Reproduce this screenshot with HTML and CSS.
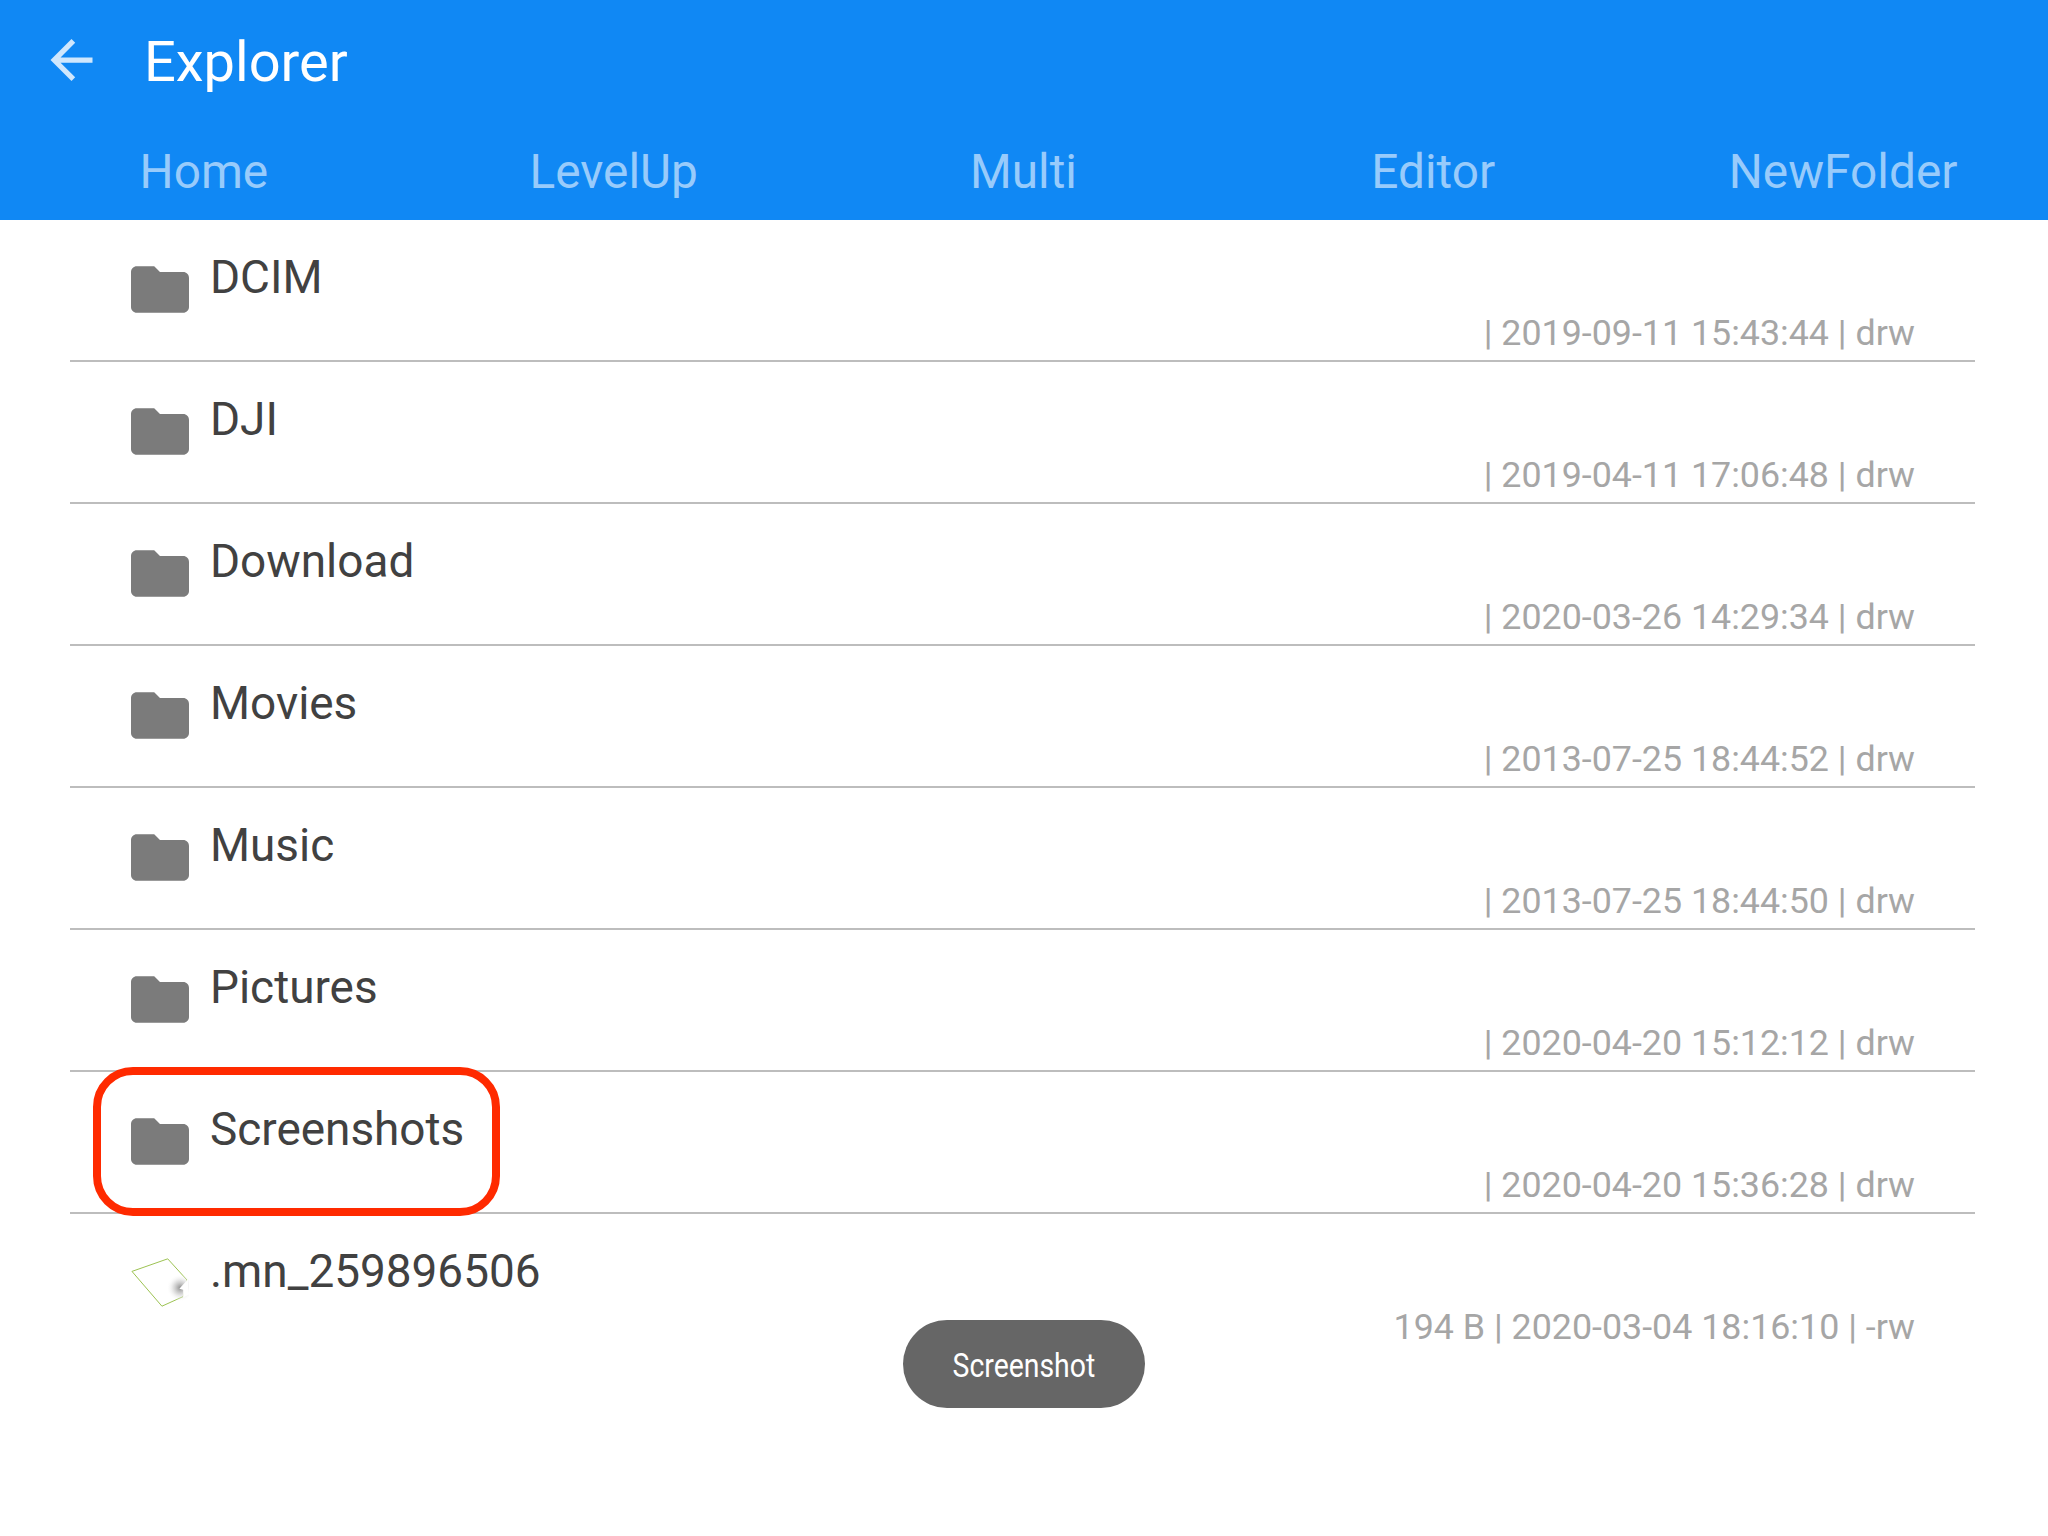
FILE: index.html
```html
<!DOCTYPE html>
<html lang="en">
<head>
<meta charset="utf-8">
<title>Explorer</title>
<link rel="stylesheet" href="styles.css">
</head>
<body>
<svg class="defs" width="0" height="0" aria-hidden="true">
  <defs>
    <symbol id="folder" viewBox="2 4 20 16"><path d="M10 4H4c-1.1 0-2 .9-2 2v12c0 1.1.9 2 2 2h16c1.1 0 2-.9 2-2V8c0-1.1-.9-2-2-2h-8l-2-2z"/></symbol>
    <radialGradient id="curl"><stop offset="0" stop-color="#8f8f8f"/><stop offset=".5" stop-color="#cfcfcf" stop-opacity=".7"/><stop offset="1" stop-color="#fff" stop-opacity="0"/></radialGradient>
  </defs>
</svg>
<header class="appbar">
  <div class="toolbar">
    <svg class="back" viewBox="4 4 16 16"><path d="M20 11H7.83l5.59-5.59L12 4l-8 8 8 8 1.41-1.41L7.83 13H20v-2z"/></svg>
    <h1 class="title">Explorer</h1>
  </div>
  <nav class="tabs">
    <span class="tab">Home</span>
    <span class="tab">LevelUp</span>
    <span class="tab">Multi</span>
    <span class="tab">Editor</span>
    <span class="tab">NewFolder</span>
  </nav>
</header>
<main class="list">
  <div class="row"><svg class="icon"><use href="#folder"/></svg><span class="name">DCIM</span><span class="meta">| 2019-09-11 15:43:44 | drw</span></div>
  <div class="row"><svg class="icon"><use href="#folder"/></svg><span class="name">DJI</span><span class="meta">| 2019-04-11 17:06:48 | drw</span></div>
  <div class="row"><svg class="icon"><use href="#folder"/></svg><span class="name">Download</span><span class="meta">| 2020-03-26 14:29:34 | drw</span></div>
  <div class="row"><svg class="icon"><use href="#folder"/></svg><span class="name">Movies</span><span class="meta">| 2013-07-25 18:44:52 | drw</span></div>
  <div class="row"><svg class="icon"><use href="#folder"/></svg><span class="name">Music</span><span class="meta">| 2013-07-25 18:44:50 | drw</span></div>
  <div class="row"><svg class="icon"><use href="#folder"/></svg><span class="name">Pictures</span><span class="meta">| 2020-04-20 15:12:12 | drw</span></div>
  <div class="row"><svg class="icon"><use href="#folder"/></svg><span class="name">Screenshots</span><span class="meta">| 2020-04-20 15:36:28 | drw</span><div class="highlight"></div></div>
  <div class="row row-last">
    <svg class="icon paper" viewBox="0 0 60 52">
      <polygon points="1,14 38,1 58,23 54,40 32,50" fill="#fff" stroke="#98c04c" stroke-width="1"/>
      <circle cx="51" cy="31" r="14" fill="url(#curl)"/>
      <polygon points="59,22 50,32 54,33 54,41 60,38" fill="#fff"/>
    </svg>
    <span class="name">.mn_259896506</span><span class="meta">194 B | 2020-03-04 18:16:10 | -rw</span>
  </div>
</main>
<div class="toast"><span class="toast-text">Screenshot</span></div>
</body>
</html>
```
FILE: styles.css
```css
html, body { margin: 0; padding: 0; background: #fff; height: 1536px; overflow: hidden; }
body { font-family: Roboto, "Liberation Sans", sans-serif; position: relative; }
.defs { position: absolute; }
.appbar { background: #1088f4; height: 220px; box-sizing: border-box; display: flex; flex-direction: column; }
.toolbar { display: flex; align-items: center; height: 124px; padding-left: 49px; box-sizing: border-box; }
.back { width: 45px; height: 42px; fill: #cfe7fd; margin-right: 50px; margin-top: -4px; flex: none; }
.title { margin: 0; color: #fff; font-size: 56px; font-weight: 400; line-height: 124px; }
.tabs { display: grid; grid-template-columns: repeat(5, 1fr); margin-left: -1px; }
.tab { text-align: center; color: #98cbfb; font-size: 47.8px; line-height: 96px; height: 96px; }
.list { display: flex; flex-direction: column; margin: 0 73px 0 70px; }
.row { position: relative; height: 142px; box-sizing: border-box; border-bottom: 2px solid #bdbdbd; display: grid; grid-template-columns: 61px 1fr; grid-template-rows: 1fr auto; padding: 0 60px 5px 61px; }
.row-last { border-bottom: none; padding-bottom: 7px; }
.icon { width: 58px; height: 47px; fill: #7b7b7b; margin-top: 46px; grid-row: 1 / span 2; }
.paper { height: 52px; margin-top: 43px; }
.name { grid-column: 2; color: #414141; font-size: 45.9px; line-height: 58px; padding: 28px 0 0 18px; }
.meta { grid-column: 2; justify-self: end; color: #a6a6a6; font-size: 35.8px; line-height: 44px; }
.highlight { position: absolute; left: 23px; top: -5px; width: 391px; height: 133px; border: 8px solid #ff2a00; border-radius: 40px; }
.toast { position: absolute; left: 903px; top: 1320px; width: 242px; height: 88px; border-radius: 44px; background: #666; color: #fff; font-size: 33px; text-align: center; line-height: 91px; }
.toast-text { display: inline-block; transform: scaleX(.86); }
```
